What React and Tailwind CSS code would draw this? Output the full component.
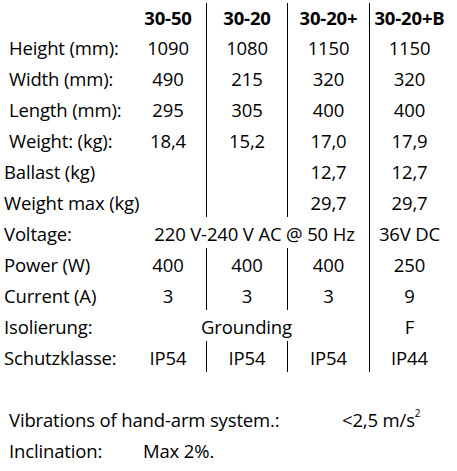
import React from 'react';

const dims = [
  ['Height (mm):', '1090', '1080', '1150', '1150'],
  ['Width (mm):', '490', '215', '320', '320'],
  ['Length (mm):', '295', '305', '400', '400'],
  ['Weight: (kg):', '18,4', '15,2', '17,0', '17,9'],
];

const cell = 'h-[31px] p-0 pt-[3px] text-center align-middle whitespace-nowrap';
const line = 'border-l border-black';

export default function App() {
  return (
    <div className="w-[457px] h-[471px] bg-white text-black text-[18.5px] leading-none tracking-[-0.15px]" style={{ fontFamily: '"Open Sans", sans-serif' }}>
      <table className="table-fixed border-separate border-spacing-0 mt-[3px] w-[449px]">
        <colgroup>
          <col className="w-[130px]" />
          <col className="w-[76px]" />
          <col className="w-[81px]" />
          <col className="w-[82px]" />
          <col className="w-[80px]" />
        </colgroup>
        <tbody>
          <tr className="font-bold">
            <td className="h-[28px] p-0 pt-[2px]"></td>
            <td className="h-[28px] p-0 pt-[2px] text-center">30-50</td>
            <td className={`h-[28px] p-0 pt-[2px] text-center ${line}`}>30-20</td>
            <td className={`h-[28px] p-0 pt-[2px] text-center ${line}`}>30-20+</td>
            <td className={`h-[28px] p-0 pt-[2px] text-center ${line}`}>30-20+B</td>
          </tr>
          {dims.map((r) => (
            <tr key={r[0]}>
              <td className={`${cell} text-left pl-[9px]`}>{r[0]}</td>
              <td className={cell}>{r[1]}</td>
              <td className={`${cell} ${line}`}>{r[2]}</td>
              <td className={`${cell} ${line}`}>{r[3]}</td>
              <td className={`${cell} ${line}`}>{r[4]}</td>
            </tr>
          ))}
          <tr>
            <td className={`${cell} text-left pl-[4px]`}>Ballast (kg)</td>
            <td className={cell}></td>
            <td className={`${cell} ${line}`}></td>
            <td className={`${cell} ${line}`}>12,7</td>
            <td className={`${cell} ${line}`}>12,7</td>
          </tr>
          <tr>
            <td className={`${cell} text-left pl-[4px]`}>Weight max (kg)</td>
            <td className={cell}></td>
            <td className={`${cell} ${line}`}></td>
            <td className={`${cell} ${line}`}>29,7</td>
            <td className={`${cell} ${line}`}>29,7</td>
          </tr>
          <tr>
            <td className={`${cell} text-left pl-[4px]`}>Voltage:</td>
            <td colSpan={3} className={`${cell} pl-[10px]`}>220 V-240 V AC @ 50 Hz</td>
            <td className={`${cell} ${line}`}>36V DC</td>
          </tr>
          <tr>
            <td className={`${cell} text-left pl-[4px]`}>Power (W)</td>
            <td className={cell}>400</td>
            <td className={`${cell} ${line}`}>400</td>
            <td className={`${cell} ${line}`}>400</td>
            <td className={`${cell} ${line}`}>250</td>
          </tr>
          <tr>
            <td className={`${cell} text-left pl-[4px]`}>Current (A)</td>
            <td className={cell}>3</td>
            <td className={`${cell} ${line}`}>3</td>
            <td className={`${cell} ${line}`}>3</td>
            <td className={`${cell} ${line}`}>9</td>
          </tr>
          <tr>
            <td className={`${cell} text-left pl-[4px]`}>Isolierung:</td>
            <td colSpan={3} className={`${cell} pr-[6px]`}>Grounding</td>
            <td className={`${cell} ${line}`}>F</td>
          </tr>
          <tr>
            <td className={`${cell} text-left pl-[4px]`}>Schutzklasse:</td>
            <td className={cell}>IP54</td>
            <td className={`${cell} ${line}`}>IP54</td>
            <td className={`${cell} ${line}`}>IP54</td>
            <td className={`${cell} ${line}`}>IP44</td>
          </tr>
        </tbody>
      </table>
      <div className="mt-[31px] pl-[9px]">
        <div className="flex h-[31px] items-center pt-[3px]">
          <span className="w-[333px] whitespace-nowrap">Vibrations of hand-arm system.:</span>
          <span className="whitespace-nowrap">
            &lt;2,5 m/s<span className="text-[10px] align-top relative -top-[3px]">2</span>
          </span>
        </div>
        <div className="flex h-[31px] items-center pt-[3px]">
          <span className="w-[134px]">Inclination:</span>
          <span>Max 2%.</span>
        </div>
      </div>
    </div>
  );
}
